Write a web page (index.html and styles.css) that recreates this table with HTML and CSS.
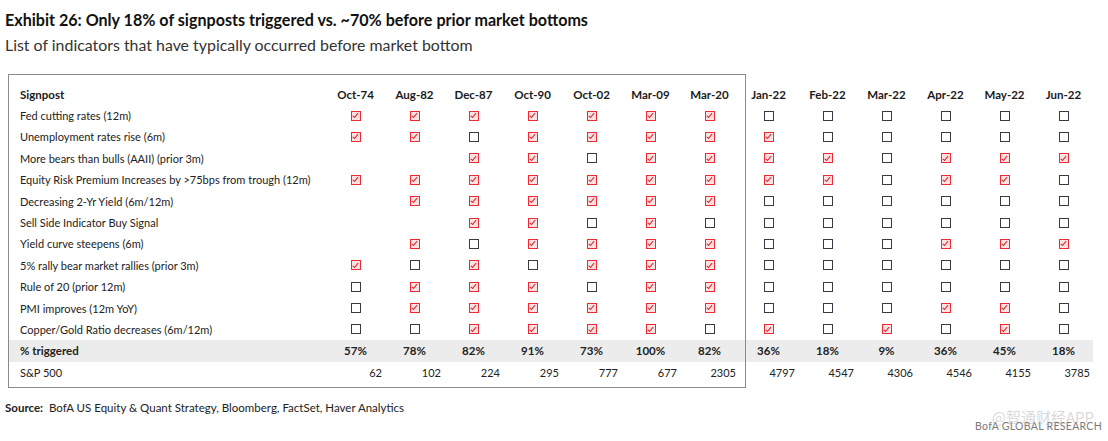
FILE: index.html
```html
<!DOCTYPE html>
<html lang="en">
<head>
<meta charset="utf-8">
<title>Exhibit 26</title>
<link rel="stylesheet" href="styles.css">
</head>
<body>
<div class="head">
  <h1 class="title">Exhibit 26: Only 18% of signposts triggered vs. ~70% before prior market bottoms</h1>
  <p class="sub">List of indicators that have typically occurred before market bottom</p>
</div>

<div class="tables">
  <div class="box">
    <div class="row hdr"><span class="lbl">Signpost</span><span>Oct-74</span><span>Aug-82</span><span>Dec-87</span><span>Oct-90</span><span>Oct-02</span><span>Mar-09</span><span>Mar-20</span></div>
    <div class="row"><span class="lbl">Fed cutting rates (12m)</span><i class="cb on"></i><i class="cb on"></i><i class="cb on"></i><i class="cb on"></i><i class="cb on"></i><i class="cb on"></i><i class="cb on"></i></div>
    <div class="row"><span class="lbl">Unemployment rates rise (6m)</span><i class="cb on"></i><i class="cb on"></i><i class="cb"></i><i class="cb on"></i><i class="cb on"></i><i class="cb on"></i><i class="cb on"></i></div>
    <div class="row"><span class="lbl">More bears than bulls (AAII) (prior 3m)</span><span></span><span></span><i class="cb on"></i><i class="cb on"></i><i class="cb"></i><i class="cb on"></i><i class="cb on"></i></div>
    <div class="row"><span class="lbl">Equity Risk Premium Increases by &gt;75bps from trough (12m)</span><i class="cb on"></i><i class="cb on"></i><i class="cb on"></i><i class="cb on"></i><i class="cb on"></i><i class="cb on"></i><i class="cb on"></i></div>
    <div class="row"><span class="lbl">Decreasing 2-Yr Yield (6m/12m)</span><span></span><i class="cb on"></i><i class="cb on"></i><i class="cb on"></i><i class="cb on"></i><i class="cb on"></i><i class="cb on"></i></div>
    <div class="row"><span class="lbl">Sell Side Indicator Buy Signal</span><span></span><span></span><i class="cb on"></i><i class="cb on"></i><i class="cb"></i><i class="cb on"></i><i class="cb"></i></div>
    <div class="row"><span class="lbl">Yield curve steepens (6m)</span><span></span><i class="cb on"></i><i class="cb"></i><i class="cb on"></i><i class="cb on"></i><i class="cb on"></i><i class="cb on"></i></div>
    <div class="row"><span class="lbl">5% rally bear market rallies (prior 3m)</span><i class="cb on"></i><i class="cb"></i><i class="cb on"></i><i class="cb"></i><i class="cb on"></i><i class="cb on"></i><i class="cb on"></i></div>
    <div class="row"><span class="lbl">Rule of 20 (prior 12m)</span><i class="cb"></i><i class="cb on"></i><i class="cb on"></i><i class="cb on"></i><i class="cb"></i><i class="cb on"></i><i class="cb on"></i></div>
    <div class="row"><span class="lbl">PMI improves (12m YoY)</span><i class="cb"></i><i class="cb on"></i><i class="cb on"></i><i class="cb on"></i><i class="cb on"></i><i class="cb on"></i><i class="cb on"></i></div>
    <div class="row"><span class="lbl">Copper/Gold Ratio decreases (6m/12m)</span><i class="cb"></i><i class="cb"></i><i class="cb on"></i><i class="cb on"></i><i class="cb on"></i><i class="cb on"></i><i class="cb"></i></div>
    <div class="row pct"><span class="lbl">% triggered</span><span>57%</span><span>78%</span><span>82%</span><span>91%</span><span>73%</span><span>100%</span><span>82%</span></div>
    <div class="row sp"><span class="lbl">S&amp;P 500</span><span>62</span><span>102</span><span>224</span><span>295</span><span>777</span><span>677</span><span>2305</span></div>
  </div>

  <div class="right">
    <div class="rrow hdr"><span>Jan-22</span><span>Feb-22</span><span>Mar-22</span><span>Apr-22</span><span>May-22</span><span>Jun-22</span></div>
    <div class="rrow"><i class="cb"></i><i class="cb"></i><i class="cb"></i><i class="cb"></i><i class="cb"></i><i class="cb"></i></div>
    <div class="rrow"><i class="cb on"></i><i class="cb"></i><i class="cb"></i><i class="cb"></i><i class="cb"></i><i class="cb"></i></div>
    <div class="rrow"><i class="cb on"></i><i class="cb on"></i><i class="cb"></i><i class="cb on"></i><i class="cb on"></i><i class="cb on"></i></div>
    <div class="rrow"><i class="cb on"></i><i class="cb on"></i><i class="cb"></i><i class="cb on"></i><i class="cb on"></i><i class="cb"></i></div>
    <div class="rrow"><i class="cb"></i><i class="cb"></i><i class="cb"></i><i class="cb"></i><i class="cb"></i><i class="cb"></i></div>
    <div class="rrow"><i class="cb"></i><i class="cb"></i><i class="cb"></i><i class="cb"></i><i class="cb"></i><i class="cb"></i></div>
    <div class="rrow"><i class="cb"></i><i class="cb"></i><i class="cb"></i><i class="cb on"></i><i class="cb on"></i><i class="cb on"></i></div>
    <div class="rrow"><i class="cb"></i><i class="cb"></i><i class="cb"></i><i class="cb"></i><i class="cb"></i><i class="cb"></i></div>
    <div class="rrow"><i class="cb"></i><i class="cb"></i><i class="cb"></i><i class="cb"></i><i class="cb"></i><i class="cb"></i></div>
    <div class="rrow"><i class="cb"></i><i class="cb"></i><i class="cb"></i><i class="cb on"></i><i class="cb on"></i><i class="cb"></i></div>
    <div class="rrow"><i class="cb on"></i><i class="cb"></i><i class="cb on"></i><i class="cb"></i><i class="cb on"></i><i class="cb"></i></div>
    <div class="rrow pct rpct"><span>36%</span><span>18%</span><span>9%</span><span>36%</span><span>45%</span><span>18%</span></div>
    <div class="rrow sp"><span>4797</span><span>4547</span><span>4306</span><span>4546</span><span>4155</span><span>3785</span></div>
  </div>
</div>

<p class="source"><b>Source:</b> BofA US Equity &amp; Quant Strategy, Bloomberg, FactSet, Haver Analytics</p>
<div class="brand">
  <span class="brand-name">BofA GLOBAL RESEARCH</span>
  <span class="watermark">@智通财经APP</span>
</div>
</body>
</html>
```

FILE: styles.css
```css
html, body {
  margin: 0;
  padding: 0;
  background: #ffffff;
}

body {
  width: 1108px;
  height: 441px;
  overflow: hidden;
  font-family: Lato, "Open Sans", "Noto Sans CJK SC", sans-serif;
  color: #222222;
}

.head {
  padding: 11px 0 0 5px;
}

.title {
  margin: 0;
  font-size: 16.1px;
  line-height: 18px;
  font-weight: 700;
  color: #111111;
}

.sub {
  margin: 7px 0 0;
  font-size: 15.9px;
  line-height: 18px;
  font-weight: 400;
  color: #333333;
}

.tables {
  display: flex;
  align-items: flex-start;
  margin: 20px 0 0 8px;
}

.box {
  width: 736px;
  border: 1px solid #8a8a8a;
  padding: 8.5px 0 4px;
}

.row {
  display: grid;
  grid-template-columns: 317px repeat(7, 59px);
  height: 21.4px;
  align-items: center;
  justify-items: center;
  font-size: 11px;
}

.row .lbl {
  justify-self: start;
  padding-left: 11px;
}

.right {
  margin-left: -7px;
  padding-top: 9.5px;
}

.rrow {
  display: grid;
  grid-template-columns: repeat(6, 59px);
  height: 21.4px;
  align-items: center;
  justify-items: center;
  font-size: 11px;
}

.hdr {
  font-size: 11.5px;
  font-weight: 700;
  color: #1a1a1a;
}

.pct {
  background: #ececec;
  font-weight: 700;
  font-size: 11.5px;
}

.rrow.rpct {
  background: linear-gradient(to right, transparent 7px, #ececec 7px);
}

.sp span {
  justify-self: end;
  padding-right: 3px;
}

.sp .lbl {
  justify-self: start;
  padding-right: 0;
}

.cb {
  display: block;
  position: relative;
  width: 10px;
  height: 10px;
  box-sizing: border-box;
  border: 1.5px solid #3a3a46;
  background: #ffffff;
}

.cb.on {
  border-color: #ec2a33;
  background: #fbe2e2;
}

.cb.on::after {
  content: "";
  position: absolute;
  left: 2.3px;
  top: 0.2px;
  width: 2.4px;
  height: 4.6px;
  border: solid #e0202a;
  border-width: 0 1.5px 1.5px 0;
  transform: rotate(40deg);
}

.source {
  margin: 13px 0 0 5px;
  font-size: 11.5px;
  line-height: 14px;
  color: #222222;
}

.source b {
  font-weight: 700;
  margin-right: 3px;
}

.brand {
  position: relative;
  display: flex;
  justify-content: flex-end;
  padding-right: 6px;
  margin-top: 3px;
  height: 16px;
}

.brand-name {
  font-size: 10.5px;
  line-height: 16px;
  color: #7a7a7a;
  letter-spacing: 0.3px;
}

.watermark {
  position: absolute;
  right: 14px;
  top: -10px;
  font-family: "Noto Sans CJK SC", sans-serif;
  font-size: 15px;
  line-height: 18px;
  color: rgba(170, 170, 170, 0.45);
}
```
